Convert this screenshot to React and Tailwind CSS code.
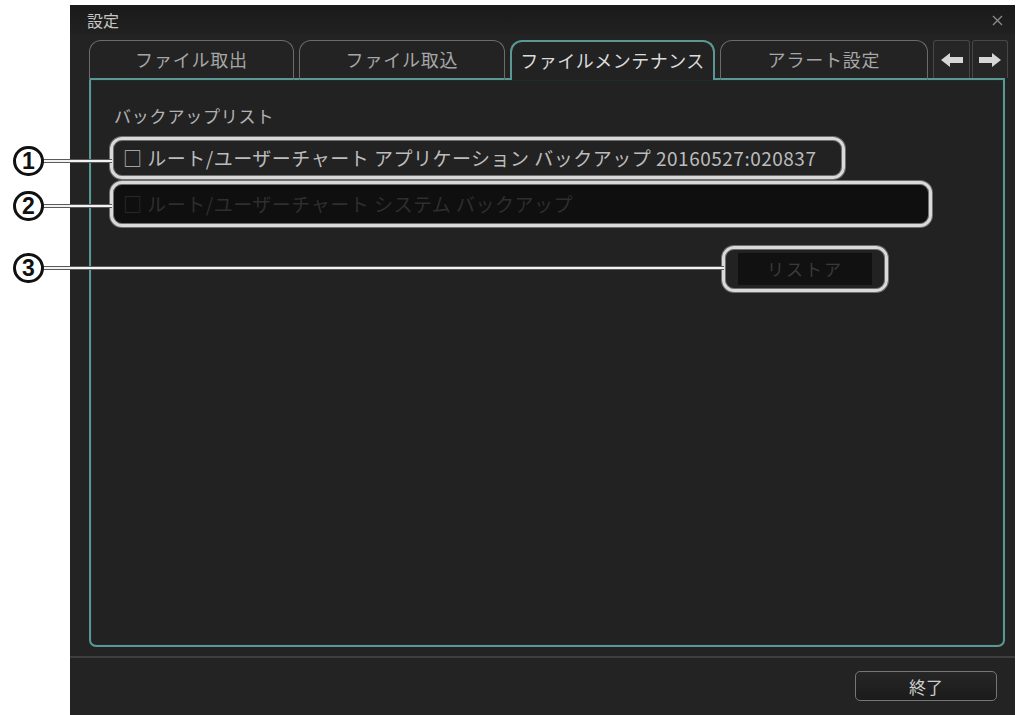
import React from "react";

const JP = "font-['Noto_Sans_CJK_JP','Noto_Sans',sans-serif]";

function ArrowIcon({ dir }) {
  return (
    <svg width="22" height="14" viewBox="0 0 22 14">
      <path
        d={dir === "left" ? "M0 7 L9 0 L9 4 L22 4 L22 10 L9 10 L9 14 Z" : "M22 7 L13 0 L13 4 L0 4 L0 10 L13 10 L13 14 Z"}
        fill="#d6d6d6"
      />
    </svg>
  );
}

function Tab({ label, active, w }) {
  if (active) {
    return (
      <div
        className={`${w} h-[40px] rounded-t-[12px] border-2 border-b-0 border-[#5b9893] bg-[#222222] flex items-center justify-center pb-[2px] text-[18px] text-[#dcdcdc] tracking-[0.5px]`}
      >
        {label}
      </div>
    );
  }
  return (
    <div
      className={`${w} h-[40px] rounded-t-[12px] border-[1.5px] border-b-0 border-[#6c6c6c] flex items-center justify-center pb-[2px] text-[18px] text-[#a6a6a6] tracking-[0.8px]`}
    >
      {label}
    </div>
  );
}

function Circled({ n, top }) {
  return (
    <div
      className="absolute left-[13px] w-[31px] h-[30px] rounded-full border-[3px] border-[#111] bg-white flex items-center justify-center font-['Liberation_Sans',sans-serif] font-bold text-[23px] text-[#111] leading-none z-20"
      style={{ top }}
    >
      {n}
    </div>
  );
}

function Leader({ top, width }) {
  return (
    <div
      className="absolute left-[42px] h-[4px] bg-[#f2f2f2] border-y border-[#5a5a5a] z-10"
      style={{ top, width }}
    />
  );
}

export default function App() {
  const ann = "border-[3px] border-[#d9d9d9] shadow-[0_0_0_1px_#6f6f6f,inset_0_0_0_1px_#6f6f6f]";
  return (
    <div className={`relative w-[1020px] h-[715px] bg-white overflow-hidden pl-[70px] pt-[5px] ${JP}`}>
      <div className="w-[945px] h-[710px] bg-[#232323] flex flex-col">
        {/* title bar */}
        <div className="h-[30px] bg-gradient-to-b from-[#1a1a1a] to-[#212121] flex items-center justify-between pl-[17px] pr-[12px]">
          <span className="text-[16px] text-[#c4c4c4] leading-none">設定</span>
          <svg width="11" height="11" viewBox="0 0 11 11">
            <path d="M1 1 L10 10 M10 1 L1 10" stroke="#8a8a8a" strokeWidth="1.4" />
          </svg>
        </div>

        {/* tabs */}
        <div className="mt-[5px] h-[40px] -mb-[2px] relative z-10 flex pl-[19px]">
          <Tab label="ファイル取出" w="w-[205px]" />
          <div className="w-[5px]" />
          <Tab label="ファイル取込" w="w-[206px]" />
          <div className="w-[5px]" />
          <Tab label="ファイルメンテナンス" active w="w-[205px]" />
          <div className="w-[5px]" />
          <Tab label="アラート設定" w="w-[208px]" />
          <div className="w-[5px]" />
          <div className="w-[37px] h-[38px] rounded-t-[3px] border border-b-0 border-[#474747] bg-[#262626] flex items-center justify-center">
            <ArrowIcon dir="left" />
          </div>
          <div className="w-[2px]" />
          <div className="w-[36px] h-[38px] rounded-t-[3px] border border-b-0 border-[#474747] bg-[#262626] flex items-center justify-center">
            <ArrowIcon dir="right" />
          </div>
        </div>

        {/* panel */}
        <div className="ml-[19px] w-[916px] h-[569px] border-2 border-[#5b9893] rounded-b-[7px] bg-[#222222] shadow-[inset_0_0_0_1px_#1a2e2c] pt-[24px] pl-[19px] flex flex-col items-start">
          <div className="ml-[4px] text-[17px] leading-[24px] text-[#b2b2b2] tracking-[0.8px]">バックアップリスト</div>
          <div className={`mt-[9px] w-[735px] h-[42px] rounded-[12px] ${ann} flex items-center pl-[10px] text-[19px] text-[#bcbcbc] tracking-[0.5px] whitespace-nowrap`}>
            □ ルート/ユーザーチャート アプリケーション バックアップ 20160527:020837
          </div>
          <div className={`mt-[2px] w-[822px] h-[46px] rounded-[12px] ${ann} bg-[#0f0f0f] flex items-center pl-[10px] text-[19px] text-[#2e2e2e] tracking-[0.5px] whitespace-nowrap`}>
            □ ルート/ユーザーチャート システム バックアップ
          </div>
          <div className={`mt-[19px] ml-[612px] w-[166px] h-[46px] rounded-[12px] ${ann} flex items-center justify-center`}>
            <div className="w-[134px] h-[32px] bg-[#111111] flex items-center justify-center text-[17px] text-[#3a3a3a] tracking-[2px]">
              リストア
            </div>
          </div>
        </div>

        {/* separator */}
        <div className="mt-[9px] h-[2px] bg-[#3e3e3e]" />

        {/* footer */}
        <div className="flex justify-end pr-[18px] mt-[13px]">
          <div className="w-[142px] h-[30px] rounded-[5px] border-[1.5px] border-[#767676] bg-gradient-to-b from-[#262626] to-[#1b1b1b] flex items-center justify-center text-[17px] text-[#cfcfcf] leading-none">
            終了
          </div>
        </div>
      </div>

      {/* annotations */}
      <Leader top={159} width={70} />
      <Leader top={204} width={70} />
      <Leader top={266} width={682} />
      <Circled n="1" top={146} />
      <Circled n="2" top={191} />
      <Circled n="3" top={253} />
    </div>
  );
}
